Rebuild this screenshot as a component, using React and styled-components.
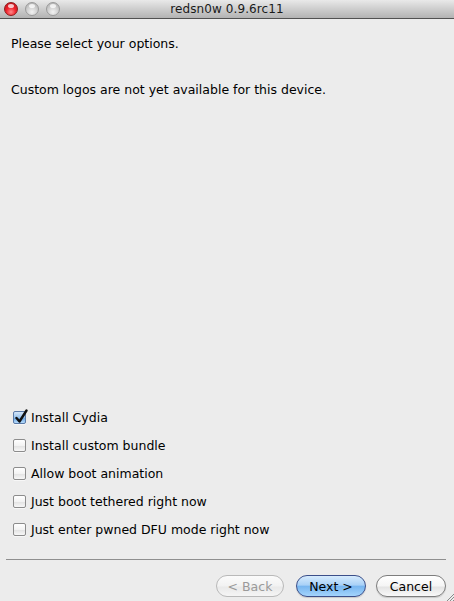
import React from "react";
import styled, { createGlobalStyle } from "styled-components";

const Global = createGlobalStyle`
  html, body { margin: 0; padding: 0; background: #ececec; }
  body { font-family: "DejaVu Sans", "Liberation Sans", sans-serif; }
  * { box-sizing: border-box; }
`;

const Window = styled.div`
  position: relative;
  width: 454px;
  height: 601px;
  display: flex;
  flex-direction: column;
  background: #ececec;
  overflow: hidden;
`;

const TitleBar = styled.div`
  height: 19px;
  flex: none;
  position: relative;
  display: flex;
  align-items: center;
  justify-content: center;
  background: linear-gradient(#e9e9e9 0%, #d0d0d0 45%, #b3b3b3 100%);
  border-bottom: 1px solid #515151;
`;

const Lights = styled.div`
  position: absolute;
  left: 4px;
  top: 2px;
  display: flex;
  gap: 7px;
`;

const Light = styled.span`
  width: 14px;
  height: 14px;
  border-radius: 50%;
  border: 1px solid ${(p) => (p.$red ? "#8e1b1b" : "#9a9a9a")};
  background: ${(p) =>
    p.$red
      ? "radial-gradient(circle at 50% 75%, #ff8a8a 0%, #f0202a 45%, #b5121b 100%)"
      : "radial-gradient(circle at 50% 75%, #f2f2f2 0%, #cfcfcf 50%, #a9a9a9 100%)"};
  position: relative;
  &::after {
    content: "";
    position: absolute;
    left: 3px;
    top: 1px;
    width: 6px;
    height: 4px;
    border-radius: 50%;
    background: rgba(255, 255, 255, 0.75);
  }
`;

const Title = styled.span`
  font-size: 12px;
  color: #1a1a1a;
  letter-spacing: 0.1px;
`;

const Body = styled.div`
  flex: 1;
  display: flex;
  flex-direction: column;
  padding: 0 11px;
`;

const Text = styled.p`
  margin: ${(p) => p.$mt}px 0 0;
  font-size: 12.5px;
  line-height: 16px;
  color: #000;
`;

const Spacer = styled.div`
  flex: 1;
`;

const Options = styled.div`
  display: flex;
  flex-direction: column;
  padding-left: 2px;
`;

const Row = styled.label`
  height: 28px;
  display: flex;
  align-items: center;
  gap: 5px;
  font-size: 12.5px;
  color: #000;
`;

const Box = styled.span`
  position: relative;
  width: 13px;
  height: 13px;
  border-radius: 2px;
  flex: none;
  border: 1px solid ${(p) => (p.$checked ? "#5a7aa8" : "#8c8c8c")};
  background: ${(p) =>
    p.$checked
      ? "linear-gradient(#d4e6f9 0%, #98c3ee 50%, #6aa6e4 55%, #b6dbfb 100%)"
      : "linear-gradient(#ffffff 0%, #f3f3f3 50%, #e3e3e3 55%, #f7f7f7 100%)"};
  box-shadow: 0 1px 0 rgba(255, 255, 255, 0.6);
`;

const Check = styled.svg`
  position: absolute;
  left: 0px;
  top: -3px;
`;

const Separator = styled.div`
  height: 1px;
  background: #8f8f8f;
  margin: 16px 8px 0 6px;
  flex: none;
`;

const Buttons = styled.div`
  display: flex;
  justify-content: flex-end;
  padding: 15px 8px 4px 0;
  flex: none;
`;

const Button = styled.button`
  width: ${(p) => p.$w}px;
  margin-left: ${(p) => p.$ml}px;
  height: 22px;
  border-radius: 11px;
  font-family: "DejaVu Sans", "Liberation Sans", sans-serif;
  font-size: 12.5px;
  padding: 0;
  display: flex;
  align-items: center;
  justify-content: center;
  color: ${(p) => (p.$disabled ? "#9a9a9a" : "#000")};
  border: 1px solid
    ${(p) => (p.$primary ? "#3b4f8a" : p.$disabled ? "#b9b9b9" : "#7d7d7d")};
  background: ${(p) =>
    p.$primary
      ? "linear-gradient(#d6ebfd 0%, #a9d1f7 45%, #78b6f0 52%, #a3d4fc 100%)"
      : p.$disabled
      ? "linear-gradient(#fbfbfb 0%, #f2f2f2 50%, #e9e9e9 55%, #f5f5f5 100%)"
      : "linear-gradient(#ffffff 0%, #f5f5f5 50%, #e4e4e4 55%, #f9f9f9 100%)"};
  box-shadow: ${(p) => (p.$disabled ? "none" : "0 1px 1px rgba(0,0,0,0.15)")};
`;

const Grip = styled.svg`
  position: absolute;
  right: 0;
  bottom: 0;
`;

const options = [
  { label: "Install Cydia", checked: true },
  { label: "Install custom bundle" },
  { label: "Allow boot animation" },
  { label: "Just boot tethered right now" },
  { label: "Just enter pwned DFU mode right now" },
];

export default function App() {
  return (
    <>
      <Global />
      <Window>
        <TitleBar>
          <Lights>
            <Light $red />
            <Light />
            <Light />
          </Lights>
          <Title>redsn0w 0.9.6rc11</Title>
        </TitleBar>
        <Body>
          <Text $mt={17}>Please select your options.</Text>
          <Text $mt={30}>Custom logos are not yet available for this device.</Text>
          <Spacer />
          <Options>
            {options.map((o) => (
              <Row key={o.label}>
                <Box $checked={o.checked}>
                  {o.checked && (
                    <Check width="14" height="15" viewBox="0 0 14 15">
                      <path
                        d="M2.5 9 L5.5 12.5 L12.5 1.5"
                        fill="none"
                        stroke="#111"
                        strokeWidth="2.4"
                        strokeLinecap="round"
                        strokeLinejoin="round"
                      />
                    </Check>
                  )}
                </Box>
                {o.label}
              </Row>
            ))}
          </Options>
        </Body>
        <Separator />
        <Buttons>
          <Button $w={68} $ml={0} $disabled>&lt; Back</Button>
          <Button $w={70} $ml={12} $primary>Next &gt;</Button>
          <Button $w={70} $ml={10}>Cancel</Button>
        </Buttons>
        <Grip width="8" height="8" viewBox="0 0 8 8">
          <path d="M8 1 L1 8 M8 4 L4 8 M8 7 L7 8" stroke="#8a8a8a" strokeWidth="1" />
        </Grip>
      </Window>
    </>
  );
}
